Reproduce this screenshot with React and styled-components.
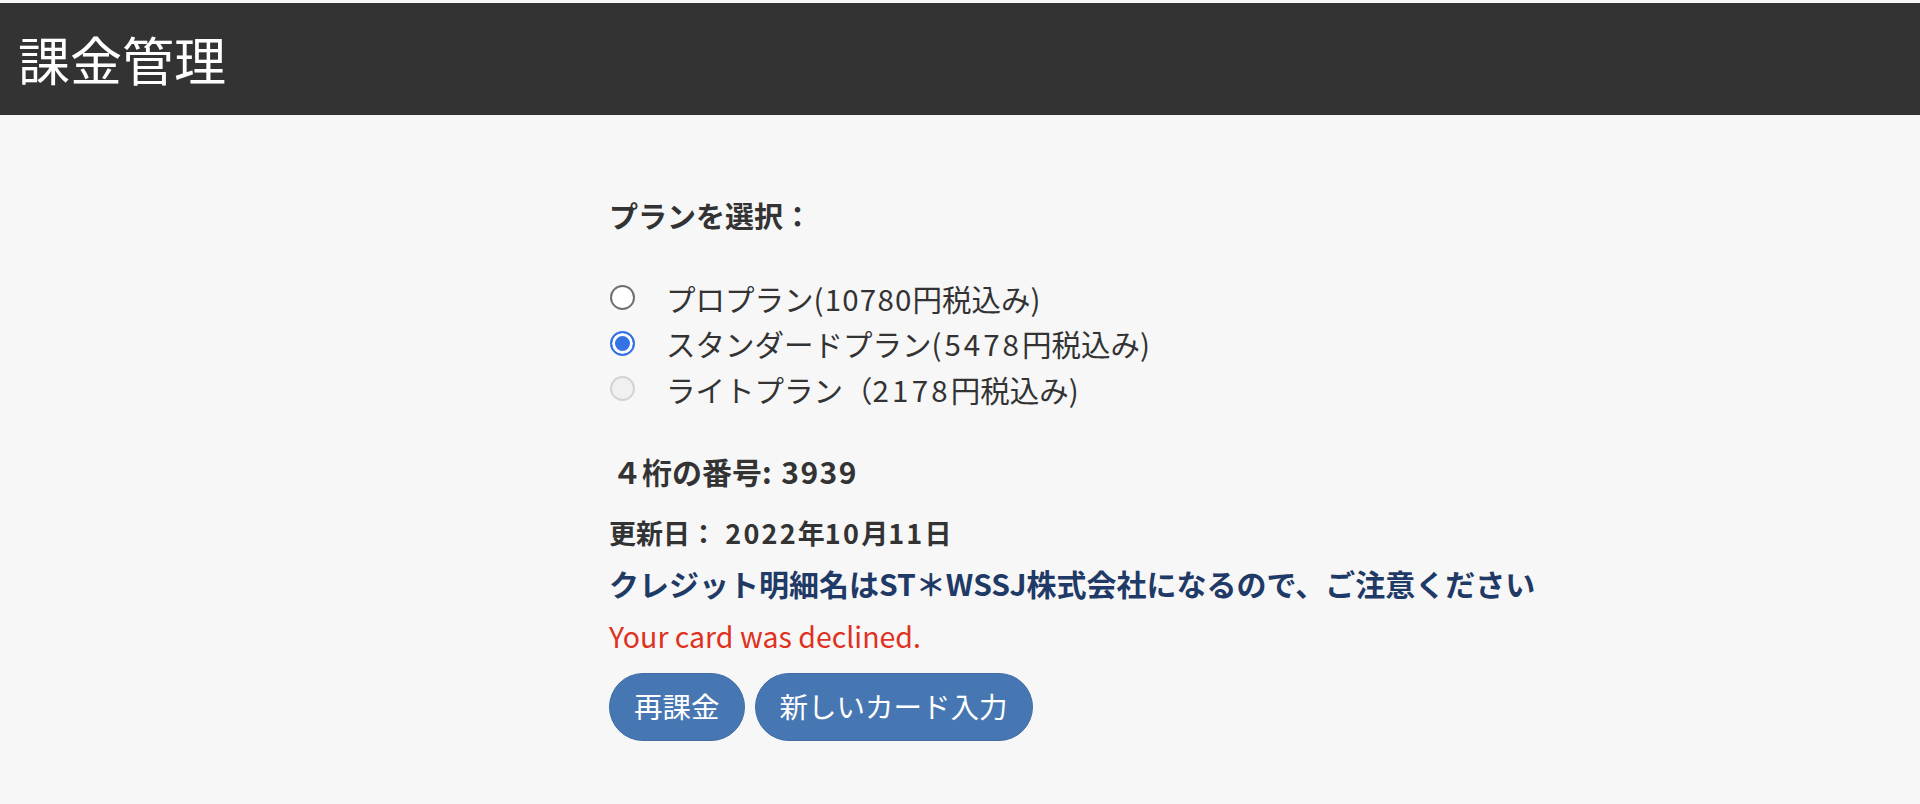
import React from "react";
import styled, { createGlobalStyle } from "styled-components";

const Global = createGlobalStyle`
  html, body { margin: 0; padding: 0; }
  body {
    background: #f7f7f7;
    font-family: "Noto Sans CJK JP", "Noto Sans", sans-serif;
    color: #333333;
    padding-top: 3px;
  }
`;

const Header = styled.header`
  height: 112px;
  background: #333333;
  display: flex;
  align-items: center;
  padding-left: 18px;
`;

const Title = styled.h1`
  margin: 0;
  color: #ffffff;
  font-size: 52px;
  font-weight: 400;
  line-height: 1;
`;

const Main = styled.main`
  width: 698px;
  margin: 78px auto 0;
  transform: translateX(-2px);
`;

const Label = styled.div`
  font-size: 29px;
  font-weight: 700;
  line-height: 45px;
  color: #333;
`;

const RadioList = styled.div`
  margin-top: 37px;
  display: flex;
  flex-direction: column;
`;

const RadioRow = styled.label`
  display: flex;
  align-items: center;
  height: 45.5px;
  font-size: 29.5px;
  color: #333;
  white-space: pre;
`;

const Latin = styled.span`
  letter-spacing: ${(p) => p.$ls || 2.2}px;
`;

const Radio = styled.input.attrs({ type: "radio" })`
  appearance: none;
  -webkit-appearance: none;
  margin: 0 31px 0 1px;
  width: 25px;
  height: 25px;
  border-radius: 50%;
  border: 2px solid #6f6f6f;
  background: #ffffff;
  box-sizing: border-box;
  flex: none;
  &:checked {
    border: 2.5px solid #3473e6;
    background: #3473e6;
    box-shadow: inset 0 0 0 3px #ffffff;
  }
  &:disabled {
    border: 2px solid #d2d2d2;
    background: #f0f0f0;
  }
`;

const Number = styled.div`
  margin-top: 37px;
  font-size: 30px;
  font-weight: 700;
  line-height: 45px;
  color: #333;
  padding-left: 3px;
`;

const Updated = styled.div`
  margin-top: 18px;
  font-size: 27px;
  font-weight: 700;
  line-height: 42px;
  color: #333;
`;

const Notice = styled.div`
  margin-top: 8px;
  font-size: 30px;
  font-weight: 700;
  line-height: 42px;
  color: #1f3a66;
  white-space: nowrap;
`;

const ErrorText = styled.div`
  margin-top: 12px;
  font-size: 28.5px;
  line-height: 40px;
  color: #e0311f;
`;

const Buttons = styled.div`
  margin-top: 17px;
  display: flex;
  gap: 10px;
`;

const Button = styled.button`
  height: 68px;
  padding: 0 24px;
  border-radius: 34px;
  border: 1px solid #3f6ea6;
  background: #4777b2;
  color: #ffffff;
  font-family: "Noto Sans CJK JP", "Noto Sans", sans-serif;
  font-size: 28.5px;
  line-height: 1;
  cursor: pointer;
`;

export default function App() {
  return (
    <>
      <Global />
      <Header>
        <Title>課金管理</Title>
      </Header>
      <Main>
        <Label>プランを選択：</Label>
        <RadioList>
          <RadioRow>
            <Radio name="plan" />
            プロプラン<Latin $ls={1.2}>(10780</Latin>円税込み<Latin $ls={1.2}>)</Latin>
          </RadioRow>
          <RadioRow>
            <Radio name="plan" defaultChecked />
            スタンダードプラン<Latin $ls={3}>(5478</Latin>円税込み<Latin $ls={3}>)</Latin>
          </RadioRow>
          <RadioRow>
            <Radio name="plan" disabled />
            ライトプラン（<Latin $ls={3.2}>2178</Latin>円税込み<Latin $ls={3.2}>)</Latin>
          </RadioRow>
        </RadioList>
        <Number>
          ４桁の番号<Latin $ls={1.4}>: 3939</Latin>
        </Number>
        <Updated>
          更新日：<Latin $ls={2.2}> 2022</Latin>年<Latin $ls={2.2}>10</Latin>月<Latin $ls={2.2}>11</Latin>日
        </Updated>
        <Notice>クレジット明細名はST＊WSSJ株式会社になるので、ご注意ください</Notice>
        <ErrorText>Your card was declined.</ErrorText>
        <Buttons>
          <Button>再課金</Button>
          <Button>新しいカード入力</Button>
        </Buttons>
      </Main>
    </>
  );
}
